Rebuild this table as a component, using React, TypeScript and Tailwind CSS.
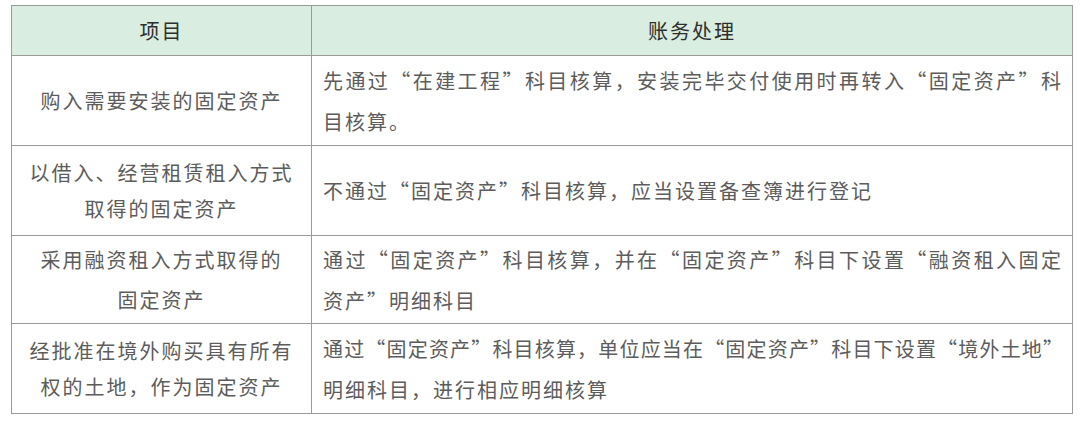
const rows = [
  {
    item: ["购入需要安装的固定资产"],
    treat: ["先通过“在建工程”科目核算，安装完毕交付使用时再转入“固定资产”科", "目核算。"],
    h: "h-[90px]",
    lead: "leading-[36px]",
    tight: false,
  },
  {
    item: ["以借入、经营租赁租入方式", "取得的固定资产"],
    treat: ["不通过“固定资产”科目核算，应当设置备查簿进行登记"],
    h: "h-[90px]",
    lead: "leading-[36px]",
    tight: false,
  },
  {
    item: ["采用融资租入方式取得的", "固定资产"],
    treat: ["通过“固定资产”科目核算，并在“固定资产”科目下设置“融资租入固定", "资产”明细科目"],
    h: "h-[88px]",
    lead: "leading-[40px]",
    tight: false,
  },
  {
    item: ["经批准在境外购买具有所有", "权的土地，作为固定资产"],
    treat: ["通过“固定资产”科目核算，单位应当在“固定资产”科目下设置“境外土地”", "明细科目，进行相应明细核算"],
    h: "h-[89px]",
    lead: "leading-[36px]",
    tight: true,
  },
];

export default function App() {
  return (
    <div className="w-[1080px] h-[426px] bg-white pt-[5px] pl-[11px] font-['Noto_Sans_CJK_SC','Noto_Sans',sans-serif]">
      <div className="w-[1062px] border border-[#9a9a9a] flex flex-col">
        <div className="grid grid-cols-[300px_1fr] h-[50px] bg-[#d9ede0] border-b border-[#9a9a9a] text-[20px] text-[#2e2e2e] tracking-[2px]">
          <div className="flex items-center justify-center border-r border-[#9a9a9a]">项目</div>
          <div className="flex items-center justify-center">账务处理</div>
        </div>
        {rows.map((r, i) => (
          <div
            key={i}
            className={`grid grid-cols-[300px_1fr] ${r.h} ${i < rows.length - 1 ? "border-b border-[#9a9a9a]" : ""} text-[20px] text-[#5c5c5c] tracking-[2px]`}
          >
            <div className={`flex flex-col items-center justify-center border-r border-[#9a9a9a] ${r.lead}`}>
              {r.item.map((t, j) => (
                <div key={j}>{t}</div>
              ))}
            </div>
            <div className="flex flex-col justify-center pl-[11px] pr-[9px] leading-[41px]">
              {r.treat.map((t, j) => (
                <div
                  key={j}
                  className={
                    j < r.treat.length - 1
                      ? `text-justify [text-align-last:justify] whitespace-nowrap ${r.tight ? "tracking-[0px]" : ""}`
                      : "whitespace-nowrap"
                  }
                >
                  {t}
                </div>
              ))}
            </div>
          </div>
        ))}
      </div>
    </div>
  );
}
